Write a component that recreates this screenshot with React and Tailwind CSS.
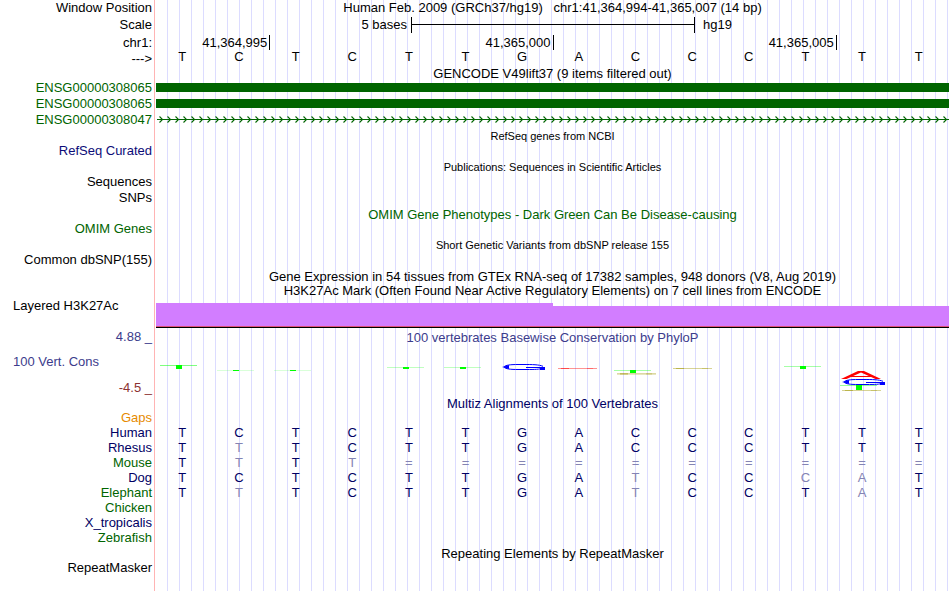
import React from 'react';

const WINDOW_BASES = 'TCTCTTGACCCTTT';

// lower case marks a base that differs from human
const ALIGNMENTS = [
  { name: 'Human', color: 'text-[#000064]', bases: 'TCTCTTGACCCTTT' },
  { name: 'Rhesus', color: 'text-[#000064]', bases: 'TtTCTTGACCCTTT' },
  { name: 'Mouse', color: 'text-[#006400]', bases: 'TtTt==========' },
  { name: 'Dog', color: 'text-[#000064]', bases: 'TCTCTTGAtCCcaT' },
  { name: 'Elephant', color: 'text-[#006400]', bases: 'TtTCTTGAtCCTaT' },
  { name: 'Chicken', color: 'text-[#006400]', bases: '' },
  { name: 'X_tropicalis', color: 'text-[#000064]', bases: '' },
  { name: 'Zebrafish', color: 'text-[#006400]', bases: '' },
];

const Row = ({ label, labelClass = '', className = 'h-4', children }) => (
  <div className={`flex leading-4 ${className}`}>
    <div className={`flex w-[154px] shrink-0 items-center justify-end whitespace-pre pr-0.5 ${labelClass}`}>
      {label}
    </div>
    <div className="flex min-w-0 flex-1 border-l border-[#ffb4b4] pl-px">
      <div className="flex min-w-0 flex-1 flex-col justify-center bg-[linear-gradient(to_right,#dcdcff_1px,transparent_1px)] bg-size-[12px_100%] bg-position-[11px_0px]">
        {children}
      </div>
    </div>
  </div>
);

const Title = ({ className = '', children }) => (
  <h2 className={`whitespace-pre text-center ${className}`}>{children}</h2>
);

const Bases = ({ bases, className = '' }) => (
  <div className={`-ml-0.5 mr-0.5 grid grid-cols-14 text-center ${className}`}>
    {bases.split('').map((base, i) => (
      <span key={i} className={/[a-z=]/.test(base) ? 'text-[#8484b4]' : ''}>
        {base.toUpperCase()}
      </span>
    ))}
  </div>
);

const GeneBar = () => (
  <Row label="ENSG00000308065" labelClass="text-[#006400]">
    <div className="mb-px h-[9px] bg-[#006400]" />
  </Row>
);

const IntronLine = () => (
  <svg className="h-4 w-full" aria-hidden="true">
    <defs>
      <pattern id="strand" x="1" y="0" width="8" height="16" patternUnits="userSpaceOnUse">
        <path d="M2.5 4.5L5.5 7.5L2.5 10.5" fill="none" stroke="#006400" strokeWidth="1.1" />
      </pattern>
    </defs>
    <rect x="1" width="100%" height="16" fill="url(#strand)" />
    <rect x="1" y="7" width="100%" height="1" fill="#006400" />
  </svg>
);

// Flattened mark: faint top stroke with a solid stem below it
const Stem = ({ x, y, depth, opacity }) => (
  <g fill="#00ff00">
    <rect x={x} y={y} width="37" height="1" opacity={opacity} />
    <rect x={x + 16} y={y} width="6" height={depth} />
  </g>
);

const Thin = ({ x, y, color, opacity = 0.5 }) => (
  <g fill={color}>
    <rect x={x} y={y} width="39" height="1" opacity={opacity * 0.6} />
    <rect x={x + 3} y={y} width="8" height="1" opacity={opacity * 0.7} />
    <rect x={x + 29} y={y} width="6" height="1" opacity={opacity * 0.4} />
  </g>
);

const Loop = ({ x, y }) => (
  <g transform={`translate(${x} ${y})`} fill="none" stroke="#0000ff">
    <path d="M41 2.3C37 0.5 30 0.5 22 0.5H16C9 0.5 3 1 2 3C3 5 9 5.500 16 5.500H25C32 5.500 38 5.500 41 4" />
    <path d="M0 3L7 1V5Z" fill="#0000ff" stroke="none" />
    <path d="M24 3.5H40" />
    <rect x="38" y="3" width="5" height="3" fill="#0000ff" stroke="none" />
  </g>
);

const ConservationLogo = () => (
  <svg viewBox="0 0 793 51" preserveAspectRatio="none" className="h-[51px] w-full" role="img" aria-label="PhyloP conservation">
    <Stem x={4} y={20} depth={4} opacity={0.5} />
    <Stem x={61} y={25} depth={1} opacity={0.15} />
    <Stem x={118} y={25} depth={1} opacity={0.15} />
    <Stem x={231} y={22} depth={2} opacity={0.25} />
    <Stem x={288} y={22} depth={2} opacity={0.25} />
    <Loop x={346} y={19} />
    <Thin x={402} y={23} color="#ff0000" opacity={0.7} />
    <Stem x={458} y={25} depth={3} opacity={0.35} />
    <Thin x={461} y={28} color="#a09600" opacity={0.6} />
    <Thin x={461} y={29} color="#a09600" opacity={0.4} />
    <Thin x={517} y={23} color="#a09600" opacity={0.7} />
    <Stem x={628} y={21} depth={3} opacity={0.35} />
    <path d="M685 34L702 26H708L725 34H719.500L705 27.500L690.500 34Z" fill="#ff0000" />
    <rect x="692" y="31" width="26" height="1" fill="#ff0000" />
    <Loop x={686} y={34} />
    <Stem x={684} y={40} depth={5} opacity={0.4} />
    <Thin x={686} y={45} color="#a09600" opacity={0.7} />
  </svg>
);

const App = () => (
  <main className="flex min-h-screen flex-col bg-white pr-px font-['Liberation_Sans',Arial,sans-serif] text-[13px] text-black">
    {/* Position and ruler */}
    <Row label="Window Position">
      <Title>{'Human Feb. 2009 (GRCh37/hg19)   chr1:41,364,994-41,365,007 (14 bp)'}</Title>
    </Row>
    <Row label="Scale" className="h-[18px]">
      <div className="grid grid-cols-[255fr_284fr_254fr]">
        <span className="pr-1 text-right">5 bases</span>
        <div className="h-4 border-x border-black pt-[7px]">
          <div className="h-px bg-black" />
        </div>
        <span className="pl-2">hg19</span>
      </div>
    </Row>
    <Row label="chr1:" labelClass="pt-0.5">
      <div className="grid grid-cols-14 text-right">
        <span className="col-span-2 -mr-px h-[15px] border-r border-black pr-0.5">41,364,995</span>
        <span className="col-span-5 -mr-px h-[15px] border-r border-black pr-0.5">41,365,000</span>
        <span className="col-span-5 -mr-px h-[15px] border-r border-black pr-0.5">41,365,005</span>
      </div>
    </Row>
    <Row label="--->" labelClass="pt-0.5" className="h-[15px]">
      <Bases bases={WINDOW_BASES} className="pb-0.5" />
    </Row>

    {/* Genes */}
    <Row className="h-[15px]">
      <Title className="pt-0.5">GENCODE V49lift37 (9 items filtered out)</Title>
    </Row>
    <GeneBar />
    <GeneBar />
    <Row label="ENSG00000308047" labelClass="text-[#006400]">
      <IntronLine />
    </Row>
    <Row className="h-[15px]">
      <Title className="text-[11px]">RefSeq genes from NCBI</Title>
    </Row>
    <Row label="RefSeq Curated" labelClass="text-[#0c0c78]" />

    {/* Literature and variants */}
    <Row className="h-[15px]">
      <Title className="text-[11px]">Publications: Sequences in Scientific Articles</Title>
    </Row>
    <Row label="Sequences" />
    <Row label="SNPs" />
    <Row>
      <Title className="pt-0.5 text-[#006400]">OMIM Gene Phenotypes - Dark Green Can Be Disease-causing</Title>
    </Row>
    <Row label="OMIM Genes" labelClass="pb-0.5 text-[#006400]" className="h-[15px]" />
    <Row>
      <Title className="text-[11px]">Short Genetic Variants from dbSNP release 155</Title>
    </Row>
    <Row label="Common dbSNP(155)" labelClass="pb-0.5" />

    {/* Expression and regulation */}
    <Row className="h-[15px]">
      <Title>Gene Expression in 54 tissues from GTEx RNA-seq of 17382 samples, 948 donors (V8, Aug 2019)</Title>
    </Row>
    <Row className="h-[14px]">
      <Title>H3K27Ac Mark (Often Found Near Active Regulatory Elements) on 7 cell lines from ENCODE</Title>
    </Row>
    <Row label="Layered H3K27Ac" labelClass="justify-start self-start pl-[13px]" className="h-8">
      <div className="mt-[3px] flex h-[25px] items-end border-b border-black">
        <div className="h-6 w-1/2 border-b border-[#dc5078] bg-[#d27dff]" />
        <div className="h-[21px] w-1/2 border-b border-[#dc5078] bg-[#d27dff]" />
      </div>
    </Row>

    {/* Conservation */}
    <Row label="4.88 _" labelClass="pb-0.5 text-[#3c3c8c]" className="h-[15px]">
      <Title className="text-[#3c3c8c]">100 vertebrates Basewise Conservation by PhyloP</Title>
    </Row>
    <Row
      className="h-[51px]"
      labelClass="flex-col items-stretch pl-[13px]"
      label={
        <>
          <span className="pb-2.5 text-[#3c3c8c]">100 Vert. Cons</span>
          <span className="text-right text-[#8c3232]">-4.5 _</span>
        </>
      }
    >
      <ConservationLogo />
    </Row>

    {/* Multiple alignment */}
    <Row className="h-[15px]">
      <Title className="text-[#000064]">Multiz Alignments of 100 Vertebrates</Title>
    </Row>
    <Row label="Gaps" labelClass="text-[#e68a00]" className="h-[14px]" />
    {ALIGNMENTS.map((species) => (
      <Row key={species.name} label={species.name} labelClass={species.color} className="h-[15px]">
        <Bases bases={species.bases} className="text-[#000064]" />
      </Row>
    ))}

    <Row>
      <Title className="pt-0.5">Repeating Elements by RepeatMasker</Title>
    </Row>
    <Row label="RepeatMasker" className="h-[14px]" />
    <Row className="flex-1" />
  </main>
);

export default App;
